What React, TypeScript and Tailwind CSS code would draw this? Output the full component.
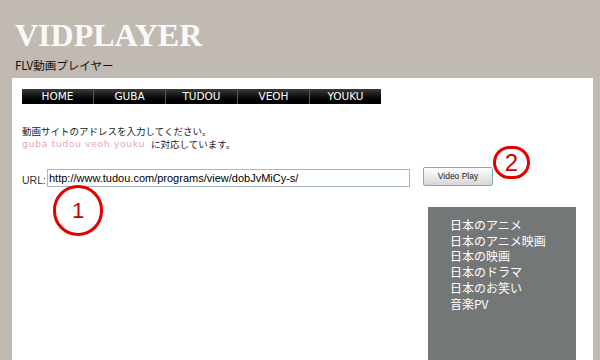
import React from "react";

const navItems = ["HOME", "GUBA", "TUDOU", "VEOH", "YOUKU"];
const genres = ["日本のアニメ", "日本のアニメ映画", "日本の映画", "日本のドラマ", "日本のお笑い", "音楽PV"];

export default function App() {
    return (
        <div className="relative w-[600px] h-[360px] overflow-hidden bg-[#c1bab3] font-['Noto_Sans_CJK_JP',sans-serif]">
            <header className="h-[78px] pl-[15px] pt-[19px]">
                <h1 className="text-[32px] leading-[32px] font-bold text-[#f9f9f9] font-['Liberation_Serif',serif]">
                    VIDPLAYER
                </h1>
                <p className="mt-[7px] text-[11.5px] leading-[14px] text-[#111]">FLV動画プレイヤー</p>
            </header>

            <main className="ml-[12px] w-[581px] h-[282px] bg-white pt-[11px] pl-[10px] pr-[17px]">
                <nav className="flex w-[359px] h-[15px] bg-gradient-to-b from-[#3c3c3c] via-[#111] to-black font-['DejaVu_Sans',sans-serif]">
                    {navItems.map((item, i) => (
                        <a
                            key={item}
                            className={`flex-1 flex items-center justify-center text-[10.5px] text-white ${i > 0 ? "border-l border-[#5a5a5a]" : ""}`}
                        >
                            {item}
                        </a>
                    ))}
                </nav>

                <div className="mt-[21px] text-[9.5px] leading-[12.5px] text-[#222]">
                    <p>動画サイトのアドレスを入力してください。</p>
                    <p className="flex items-center">
                        <span className="mr-[6px] text-[#e3a6bd] tracking-[0.5px] font-['DejaVu_Sans',sans-serif]">
                            guba tudou veoh youku
                        </span>
                        <span>に対応しています。</span>
                    </p>
                </div>

                <div className="mt-[18px] flex items-end h-[19px] font-['Liberation_Sans',sans-serif]">
                    <label className="w-[25px] text-[10.5px] leading-[14px] text-[#333]">URL:</label>
                    <input
                        readOnly
                        value="http://www.tudou.com/programs/view/dobJvMiCy-s/"
                        className="w-[363px] h-[18px] border border-[#a5b8c8] px-[1px] text-[11px] text-black outline-none"
                    />
                    <button className="ml-[13px] mb-[1px] w-[70px] h-[19px] rounded-[2px] border border-[#8aaab8] bg-gradient-to-b from-white to-[#d6d6d6] text-[8.5px] text-[#222]">
                        Video Play
                    </button>
                </div>

                <div className="mt-[20px] flex justify-end">
                    <ul className="w-[148px] h-[160px] bg-[#737778] pl-[22px] pt-[10px] text-[12px] leading-[15.7px] text-white">
                        {genres.map((g) => (
                            <li key={g}>{g}</li>
                        ))}
                    </ul>
                </div>
            </main>

            <div className="absolute left-[53px] top-[185px] w-[50px] h-[51px] rounded-full border-[3px] border-[#e30000] flex items-center justify-center text-[22px] text-[#c80000] font-['Liberation_Sans',sans-serif]">
                1
            </div>
            <div className="absolute left-[493px] top-[146px] w-[37px] h-[33px] rounded-full border-[3px] border-[#e30000] flex items-center justify-center text-[24px] leading-none text-[#c80000] font-['Liberation_Sans',sans-serif]">
                2
            </div>
        </div>
    );
}
